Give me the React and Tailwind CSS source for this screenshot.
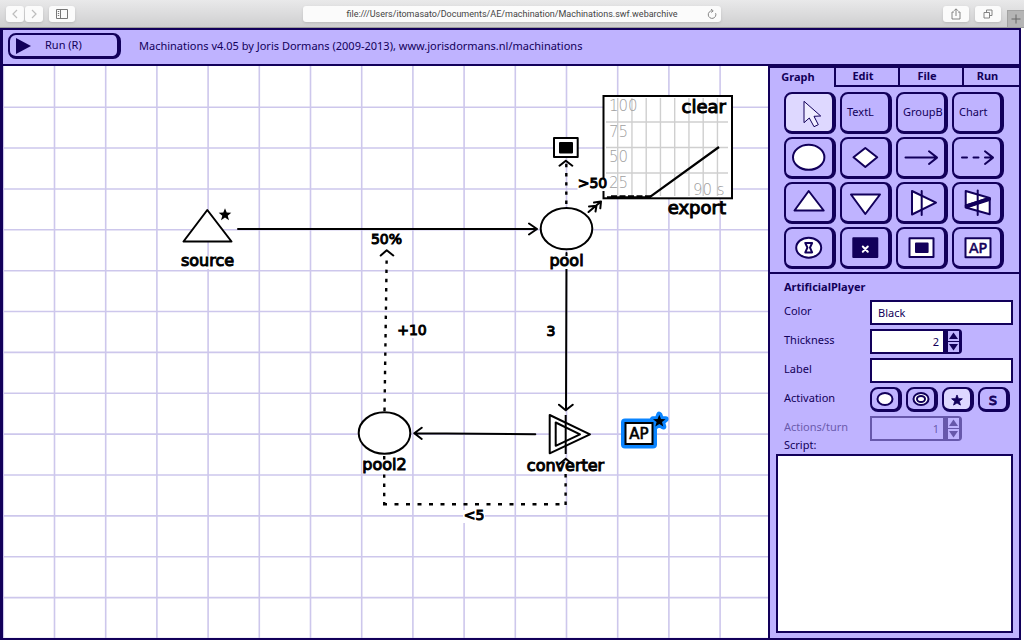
import React, { useState } from "react";

const uiFont = "font-['Noto_Sans',sans-serif]";
const frame = "border-t-2 border-l-2 border-r-4 border-b-[3px] border-[#12005a] rounded-lg";
const field = "h-[25px] min-w-0 border-2 border-[#12005a] pl-1.5 pr-1 text-[11px] text-[#12005a] outline-none";

const starPath = "M0,-6.5 L1.7,-2.2 L6.3,-2 L2.7,0.9 L4,5.4 L0,2.8 L-4,5.4 L-2.7,0.9 L-6.3,-2 L-1.7,-2.2 Z";

// Icons are drawn on a 46x37 area, the inside of a tool button
const ToolIcon = ({ children }) => (
  <svg
    viewBox="0 0 46 37"
    className="w-[46px] h-[37px]"
    fill="#fff"
    stroke="#12005a"
    strokeWidth="2"
    strokeLinejoin="round"
    strokeLinecap="round"
    aria-hidden="true"
  >
    {children}
  </svg>
);

const tools = [
  {
    name: "Select",
    icon: <path d="M18,7.7 V28.7 L23.3,24 L28,32.7 L32.3,30.7 L28,22.3 L34.3,22 Z" strokeWidth="1" fill="#f0edff" />,
  },
  { name: "Text label", text: "TextL" },
  { name: "Group box", text: "GroupB" },
  { name: "Chart", text: "Chart" },
  { name: "Pool", icon: <ellipse cx="22.7" cy="18.3" rx="15.7" ry="12.5" /> },
  { name: "Gate", icon: <path d="M11.5,18.3 L23.3,9 L35.2,18.3 L23.3,28 Z" /> },
  { name: "Resource connection", icon: <path d="M7.5,18.6 H39 M31,12.3 L39,18.6 L31,25" fill="none" /> },
  {
    name: "State connection",
    icon: <path d="M8,18.6 H13 M19.5,18.6 H24.5 M31,18.6 H39 M31,12.3 L39,18.6 L31,25" fill="none" />,
  },
  { name: "Source", icon: <path d="M22.7,7 L8.5,26.5 H37.7 Z" /> },
  { name: "Drain", icon: <path d="M9,10.5 H38 L23.3,30 Z" /> },
  {
    name: "Converter",
    icon: (
      <>
        <path d="M14,7 V30.5 L38,18.7 Z" />
        <path d="M23.7,7 V31" />
      </>
    ),
  },
  {
    name: "Trader",
    icon: (
      <>
        <path d="M11.7,7 L35.7,14 L11.7,21.5 Z" />
        <path d="M35.7,15 V30.3 L11.7,23.5 Z" />
        <path d="M12.5,22.3 L35,15" strokeWidth="4" />
        <path d="M23.7,6.5 V31" />
      </>
    ),
  },
  {
    name: "Delay",
    icon: (
      <>
        <ellipse cx="22.7" cy="18.7" rx="12.5" ry="10" />
        <path d="M19.3,14 H26.1 L24,18.7 L26.1,23.4 H19.3 L21.4,18.7 Z" />
      </>
    ),
  },
  {
    name: "Register",
    icon: (
      <>
        <rect x="11.3" y="9.3" width="24" height="18.7" fill="#12005a" />
        <path d="M20.8,17.5 L25.8,22.7 M25.8,17.5 L20.8,22.7" stroke="#fff" />
      </>
    ),
  },
  {
    name: "End condition",
    icon: (
      <>
        <rect x="11.5" y="9.3" width="24" height="18.7" />
        <rect x="18" y="14.5" width="11.6" height="8.6" fill="#12005a" />
      </>
    ),
  },
  {
    name: "Artificial player",
    icon: (
      <>
        <rect x="11.5" y="9.3" width="25" height="19" />
        <text
          x="24"
          y="23.6"
          textAnchor="middle"
          fill="#12005a"
          strokeWidth="0.6"
          className="text-[14px] font-['DejaVu_Sans',sans-serif]"
        >
          AP
        </text>
      </>
    ),
  },
];

const activations = [
  { name: "Passive", icon: <ellipse cx="13" cy="10" rx="7.5" ry="6" fill="#fff" /> },
  {
    name: "Interactive",
    icon: (
      <>
        <ellipse cx="13" cy="10" rx="7.5" ry="6" fill="#fff" />
        <ellipse cx="13" cy="10" rx="4" ry="3" fill="#fff" />
      </>
    ),
  },
  { name: "Automatic", icon: <path d={starPath} transform="translate(13 11.5) scale(0.85)" fill="#12005a" strokeWidth="1" /> },
  {
    name: "Starting action",
    icon: (
      <text x="13" y="16" textAnchor="middle" fill="#12005a" strokeWidth="0.8" className="text-base font-['DejaVu_Sans',sans-serif]">
        s
      </text>
    ),
  },
];

const Name = ({ x, y, w, size = "text-base", children }) => (
  <>
    <rect x={x - w / 2} y={y - 10} width={w} height="13" fill="#fff" />
    <text x={x} y={y} textAnchor="middle" stroke="#000" strokeWidth="1" className={size}>
      {children}
    </text>
  </>
);

const Diagram = () => (
  <svg className="absolute inset-0 w-full h-full font-['DejaVu_Sans',sans-serif]" role="img" aria-label="Diagram">
    <g stroke="#cdc7ec" strokeWidth="1.6">
      {Array.from({ length: 50 }, (_, i) => (
        <line key={i} x1={0.3 + i * 51.2} x2={0.3 + i * 51.2} y1="0" y2="100%" />
      ))}
      {Array.from({ length: 50 }, (_, i) => (
        <line key={i} x1="0" x2="100%" y1={41.2 + i * 40.87} y2={41.2 + i * 40.87} />
      ))}
    </g>

    {/* resource connections */}
    <g fill="none" stroke="#000" strokeWidth="2" strokeLinecap="round" strokeLinejoin="round">
      <path d="M235,163 H534 M526,157.5 L534,163 L526,168.5" />
      <path d="M563.5,187 L563,344.3 M556,338.7 L562.7,344.3 L569.7,338.7" />
      <path d="M532.3,368.3 L411.3,367.3 M418.7,361.7 L411.3,367.3 L418.7,373" />
      <path d="M585.5,146 L598,135.5 M591,136.5 L598,135.5 L597.3,142.3 M586,140.5 L593.5,139.7 L592.5,145.5" />
    </g>

    {/* state connections */}
    <g fill="none" stroke="#000" strokeWidth="2.4">
      <path d="M381.5,345 L383.7,189" strokeDasharray="3.4 5.8" />
      <path d="M563.3,138 V97" strokeDasharray="3.4 5.8" />
      <path d="M381.2,390 V438" strokeDasharray="3.4 5.8" />
      <path d="M380,438.2 H563" strokeDasharray="4 7.5" />
      <path d="M562.6,439 V405" strokeDasharray="3.4 5.8" />
      <path
        d="M377.7,189.5 L383.7,184.3 L390.3,189.5 M556.5,99.7 L562.8,94.7 L569.3,99.7"
        strokeWidth="2"
        strokeLinecap="round"
        strokeLinejoin="round"
      />
    </g>

    <g fill="#fff" stroke="#000" strokeWidth="2" strokeLinejoin="round">
      <path d="M204.3,144 L180.5,175.5 H228.5 Z" />
      <ellipse cx="563.5" cy="162.6" rx="25.8" ry="20.7" />
      <ellipse cx="381.5" cy="367" rx="25.8" ry="20.7" />
      <path d="M546.7,349 V387.3 L587,368.3 Z" />
      <path d="M552.7,356.5 V379.8 L577,368.3 Z" />
      <path d="M562.7,349 V388" />
      <rect x="551" y="72" width="23.7" height="19" />
      <rect x="557" y="77" width="12" height="9.6" fill="#000" />
    </g>
    <path d={starPath} transform="translate(222 148.8)" />

    {/* chart */}
    <rect x="600.5" y="30" width="128.5" height="102.3" fill="#fff" stroke="#000" strokeWidth="2" />
    <g stroke="#cfcfcf" strokeWidth="1.4">
      {[...Array(8).keys()].map((i) => (
        <line key={i} x1={614.7 + i * 14.25} x2={614.7 + i * 14.25} y1="32" y2="130" />
      ))}
      {[56, 81.5, 107].map((y) => (
        <line key={y} x1="603" x2="725" y1={y} y2={y} />
      ))}
    </g>
    <g fill="#a0a0a0" className="text-[15px] font-extralight">
      <text x="606" y="45">100</text>
      <text x="606" y="71">75</text>
      <text x="606" y="96">50</text>
      <text x="606" y="122">25</text>
      <text x="690" y="129">90 s</text>
    </g>
    <g fill="none" stroke="#000">
      <path d="M604,131.3 H646.3 L716,81" strokeWidth="2.2" />
      <path d="M608,130.7 H648" strokeWidth="3" strokeDasharray="6 2.5" />
    </g>
    <g stroke="#000" strokeWidth="1" className="text-lg">
      <text x="723" y="47" textAnchor="end">clear</text>
      <text x="723" y="148" textAnchor="end">export</text>
    </g>

    <Name x={204.5} y={200} w={56}>source</Name>
    <Name x={563.5} y={200} w={36}>pool</Name>
    <Name x={381.5} y={404} w={44}>pool2</Name>
    <Name x={562.5} y={405} w={82}>converter</Name>
    <Name x={383.5} y={178} w={32} size="text-sm">50%</Name>
    <Name x={409} y={269} w={32} size="text-sm">+10</Name>
    <Name x={548} y={270} w={12} size="text-sm">3</Name>
    <Name x={589.5} y={122} w={30} size="text-sm">&gt;50</Name>
    <Name x={471} y={454} w={22} size="text-sm">&lt;5</Name>
    <path d="M556.3,398 L562.7,392.7 L569.3,398" fill="none" stroke="#000" strokeWidth="2" strokeLinecap="round" />

    {/* selected node */}
    <g stroke="#0a84ff" strokeWidth="8" strokeLinejoin="round">
      <rect x="622" y="356.5" width="28" height="22" />
      <path d={starPath} transform="translate(656.3 355.2)" strokeWidth="6" />
    </g>
    <rect x="622.5" y="357" width="27" height="21" fill="#fff" stroke="#000" strokeWidth="2" />
    <path d={starPath} transform="translate(656.3 355.2)" />
    <text x="636" y="372.5" textAnchor="middle" stroke="#000" strokeWidth="0.6" className="text-[15px]">
      AP
    </text>
  </svg>
);

const NumberField = ({ id, value, onChange, disabled }) => (
  <div className={`flex w-[92px] ${disabled ? "opacity-50" : ""}`}>
    <input
      id={id}
      inputMode="numeric"
      value={value}
      disabled={disabled}
      onChange={(e) => onChange(Number(e.target.value) || 0)}
      className={`${field} flex-1 text-right ${disabled ? "bg-transparent" : "bg-white"}`}
    />
    <div className="flex flex-col justify-center gap-px w-[17px] px-[3px] rounded-r-sm bg-[#12005a]">
      <button aria-label="Increase" disabled={disabled} onClick={() => onChange(value + 1)} className="h-[10px] bg-[#bfb3ff]">
        <svg viewBox="0 0 11 10" className="w-full h-full" fill="#12005a">
          <path d="M5.5,1.5 L10,8 H1 Z" />
        </svg>
      </button>
      <button aria-label="Decrease" disabled={disabled} onClick={() => onChange(value - 1)} className="h-[10px] bg-[#bfb3ff]">
        <svg viewBox="0 0 11 10" className="w-full h-full" fill="#12005a">
          <path d="M5.5,8.5 L10,2 H1 Z" />
        </svg>
      </button>
    </div>
  </div>
);

const chromeButton = "h-4 flex items-center justify-center rounded-[3px] bg-[#fbfbfb] text-[#777] shadow-sm";

const BrowserBar = () => (
  <div className="flex items-center h-7 shrink-0 border-b border-[#9c9c9c] bg-linear-to-b from-[#e9e9ea] to-[#cfcfd0]">
    <div className="flex flex-1 items-center">
      <button aria-label="Back" className={`${chromeButton} w-[18px] ml-1.5`}>
        <svg viewBox="0 0 8 10" className="w-2 h-2.5" fill="none" stroke="#bdbdbd" strokeWidth="1.2">
          <path d="M6,1 L2,5 L6,9" />
        </svg>
      </button>
      <button aria-label="Forward" className={`${chromeButton} w-[18px] ml-px`}>
        <svg viewBox="0 0 8 10" className="w-2 h-2.5" fill="none" stroke="#bdbdbd" strokeWidth="1.2">
          <path d="M2,1 L6,5 L2,9" />
        </svg>
      </button>
      <button aria-label="Sidebar" className={`${chromeButton} w-[26px] ml-1.5`}>
        <svg viewBox="0 0 12 10" className="w-3 h-2.5" fill="none" stroke="#777" strokeWidth="1">
          <path d="M0.5,0.5 H11.5 V9.5 H0.5 Z M4.5,0.5 V9.5 M1.8,2.5 H3.2 M1.8,4.5 H3.2 M1.8,6.5 H3.2" />
        </svg>
      </button>
    </div>
    <div className="flex items-center w-[418px] h-4 px-1 rounded-[3px] bg-[#fbfbfb] shadow-sm">
      <input
        aria-label="Address"
        defaultValue="file:///Users/itomasato/Documents/AE/machination/Machinations.swf.webarchive"
        className="flex-1 min-w-0 pl-2.5 text-center text-[9px] leading-4 text-[#444] font-['Roboto',sans-serif] outline-none"
      />
      <button aria-label="Reload">
        <svg viewBox="0 0 10 10" className="w-2.5 h-2.5" fill="none" stroke="#777" strokeWidth="0.9">
          <path d="M8.6,4.2 A3.8,3.8 0 1 1 5,1.8 M4,0.2 L6.2,1.8 L4.4,3.6" />
        </svg>
      </button>
    </div>
    <div className="flex flex-1 items-center justify-end self-stretch">
      <button aria-label="Share" className={`${chromeButton} w-[26px] mr-1.5`}>
        <svg viewBox="0 0 10 12" className="w-2.5 h-3" fill="none" stroke="#777" strokeWidth="0.9">
          <path d="M3,4 H1 V11 H9 V4 H7 M5,8 V1 M3,2.8 L5,0.8 L7,2.8" />
        </svg>
      </button>
      <button aria-label="Tabs" className={`${chromeButton} w-[26px] mr-1.5`}>
        <svg viewBox="0 0 10 10" className="w-2.5 h-2.5" fill="none" stroke="#777" strokeWidth="0.9">
          <path d="M1,3.5 H6.5 V9 H1 Z M3.5,3.5 V1 H9 V6.5 H6.5" />
        </svg>
      </button>
      <button aria-label="New tab" className="self-end w-[17px] h-[17px] flex items-center justify-center bg-[#b5b5b5] border-l border-t border-[#a2a2a2]">
        <svg viewBox="0 0 10 10" className="w-2.5 h-2.5" stroke="#666" strokeWidth="1">
          <path d="M5,0.5 V9.5 M0.5,5 H9.5" />
        </svg>
      </button>
    </div>
  </div>
);

export default function App() {
  const [tab, setTab] = useState("Graph");
  const [tool, setTool] = useState("Select");
  const [activation, setActivation] = useState("Automatic");
  const [thickness, setThickness] = useState(2);
  const [actions, setActions] = useState(1);

  return (
    <div className="flex flex-col min-h-screen bg-white">
      <BrowserBar />
      <div className={`flex flex-1 flex-col mr-[3px] border-l-[3px] border-r-2 border-y-2 border-[#12005a] bg-[#bfb3ff] text-[11px] text-[#12005a] ${uiFont}`}>
        <header className="flex items-center h-9 shrink-0 pl-[5px] pb-0.5 gap-[18px] border-b-2 border-[#12005a]">
          <button className={`${frame} flex items-center w-[113px] h-[26px] pl-1.5 gap-3.5`}>
            <svg viewBox="0 0 15 16" className="w-[15px] h-4" fill="#12005a" aria-hidden="true">
              <path d="M0,0 L15,8 L0,16 Z" />
            </svg>
            Run (R)
          </button>
          <h1>Machinations v4.05 by Joris Dormans (2009-2013), www.jorisdormans.nl/machinations</h1>
        </header>

        <div className="flex flex-1">
          <main className="relative flex-1 overflow-hidden bg-white">
            <Diagram />
          </main>

          <aside className="flex flex-col w-[251px] shrink-0 border-l-2 border-[#12005a]">
            <div role="tablist" className="flex h-[21px] border-t-2 border-[#12005a] font-bold">
              {["Graph", "Edit", "File", "Run"].map((t) => (
                <button
                  key={t}
                  role="tab"
                  aria-selected={tab === t}
                  onClick={() => setTab(t)}
                  className={`h-[19px] border-[#12005a] ${t === "Run" ? "flex-1 pr-2" : "w-16 pr-2"} ${
                    t === "Graph" ? "" : "border-l-2"
                  } ${tab === t ? "" : "border-b-2"}`}
                >
                  {t}
                </button>
              ))}
            </div>

            <div className="grid grid-cols-4 gap-x-1 gap-y-[3px] pt-[5px] pb-[3px] pl-3.5 pr-[15px] border-b-2 border-[#12005a]">
              {tools.map((t) => (
                <button
                  key={t.name}
                  aria-label={t.name}
                  aria-pressed={tool === t.name}
                  onClick={() => setTool(t.name)}
                  className={`${frame} h-[42px] flex items-center ${tool === t.name ? "bg-[#ded8ff]" : ""}`}
                >
                  {t.text ? <span className="pl-[5px]">{t.text}</span> : <ToolIcon>{t.icon}</ToolIcon>}
                </button>
              ))}
            </div>

            <section className="flex flex-1 flex-col px-1.5 pb-[5px] pt-1">
              <h2 className="pl-2 leading-[18px] font-bold">ArtificialPlayer</h2>
              <div className="grid grid-cols-[86px_1fr] gap-y-1 pl-2 pt-1 leading-[22px]">
                <label htmlFor="color">Color</label>
                <input id="color" defaultValue="Black" className={`${field} bg-white`} />
                <label htmlFor="thickness">Thickness</label>
                <NumberField id="thickness" value={thickness} onChange={setThickness} />
                <label htmlFor="label">Label</label>
                <input id="label" className={`${field} bg-white`} />
                <span>Activation</span>
                <div role="group" aria-label="Activation" className="flex gap-1">
                  {activations.map((a) => (
                    <button
                      key={a.name}
                      aria-label={a.name}
                      aria-pressed={activation === a.name}
                      onClick={() => setActivation(a.name)}
                      className={`${frame} w-8 h-[25px] ${activation === a.name ? "bg-[#ded8ff]" : ""}`}
                    >
                      <svg viewBox="0 0 26 20" className="w-[26px] h-5" fill="none" stroke="#12005a" strokeWidth="2" aria-hidden="true">
                        {a.icon}
                      </svg>
                    </button>
                  ))}
                </div>
                <label htmlFor="actions" className="opacity-50">Actions/turn</label>
                <NumberField id="actions" value={actions} onChange={setActions} disabled />
              </div>
              <label htmlFor="script" className="-mt-1 mb-px pl-2 leading-4">Script:</label>
              <textarea id="script" className="flex-1 w-full resize-none border-2 border-[#12005a] bg-white p-1 outline-none" />
            </section>
          </aside>
        </div>
      </div>
    </div>
  );
}
